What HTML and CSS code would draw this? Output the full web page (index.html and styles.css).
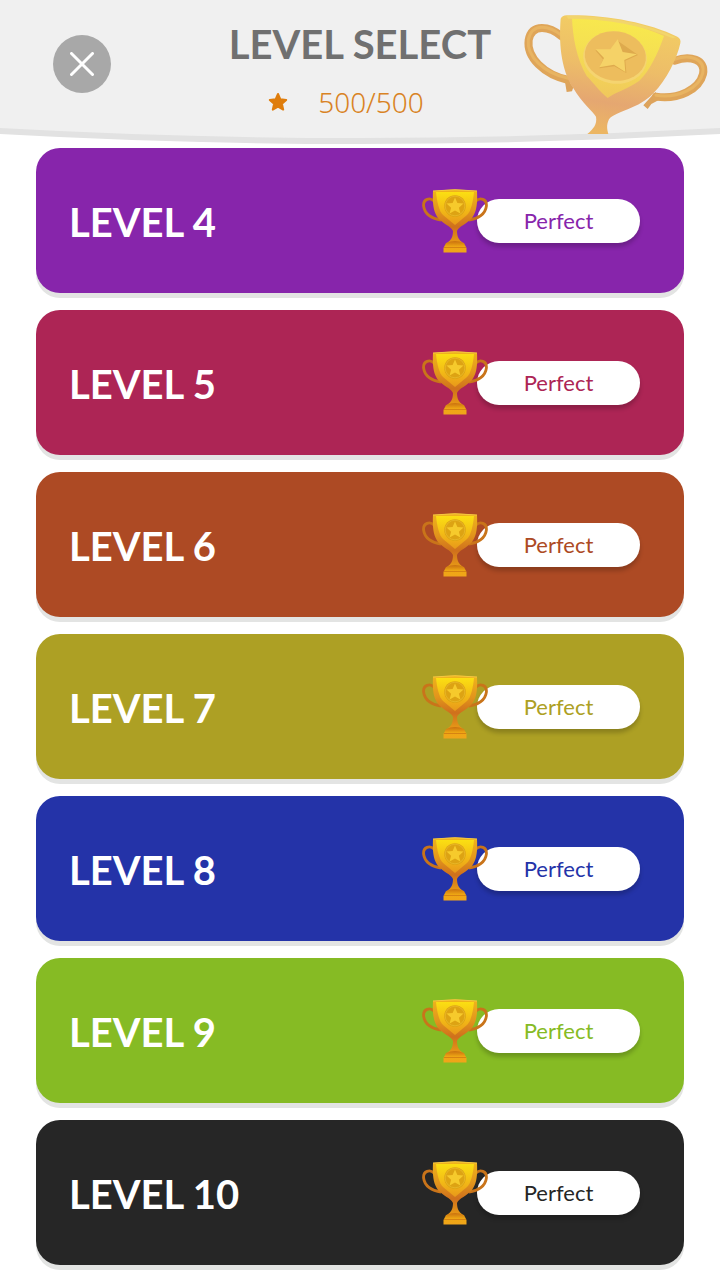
FILE: index.html
```
<!DOCTYPE html>
<html lang="en">
  <head>
    <meta charset="UTF-8">
    <meta name="viewport" content="width=device-width, initial-scale=1.0">
    <title>Level Select</title>
    <link rel="stylesheet" href="styles.css">
  </head>
  <body>
    <!-- shared trophy icon -->
    <svg class="sprite" aria-hidden="true">
      <defs>
        <linearGradient id="cup" x1="0" y1="0" x2="0" y2="1">
          <stop offset="0" stop-color="#efb51c"/>
          <stop offset="0.4" stop-color="#e2951c"/>
          <stop offset="0.7" stop-color="#cf701c"/>
          <stop offset="1" stop-color="#e89a16"/>
        </linearGradient>
        <linearGradient id="shine" x1="0" y1="0" x2="0" y2="1">
          <stop offset="0" stop-color="#fbdf12"/>
          <stop offset="0.5" stop-color="#f3bd16"/>
          <stop offset="1" stop-color="#e8981a"/>
        </linearGradient>
        <linearGradient id="base" x1="0" y1="0" x2="0" y2="1">
          <stop offset="0" stop-color="#c9700f"/>
          <stop offset="0.5" stop-color="#efa814"/>
          <stop offset="1" stop-color="#f0a41a"/>
        </linearGradient>
      </defs>
      <symbol id="trophy" viewBox="0 0 66 64">
        <g fill="none" stroke="#c9741a" stroke-width="2.8">
          <path d="M12 12C8 8 1 10 1.600 17C2.500 25 10 30 19 31"/>
          <path d="M54 12C58 8 65 10 64.400 17C63.500 25 56 30 47 31"/>
        </g>
        <path fill="url(#cup)" d="M11 2Q33 -1 55 2C55.500 14 55 22 50 29C45 35 37 37 35 42C35 48 37 51 41 54H25C29 51 31 48 31 42C29 37 21 35 16 29C11 22 10.500 14 11 2Z"/>
        <path fill="url(#shine)" d="M14 3H52C51 13 49 22 45 26L33 36L21 26C17 22 15 13 14 3Z"/>
        <path fill="none" stroke="#f5c842" d="M11 2Q33 -0.500 55 2"/>
        <circle cx="33" cy="17" r="10.800" fill="#dda313"/>
        <circle cx="33" cy="17" r="9.800" fill="none" stroke="#e9b92b" stroke-width="0.800"/>
        <path fill="#f6ca2c" d="M33 8.500L35.400 14L41.500 14.600L36.900 18.700L38.400 24.600L33 21.400L27.600 24.600L29.100 18.700L24.500 14.600L30.600 14Z"/>
        <path fill="url(#base)" d="M24 54Q33 50 42 54L44.500 59V63.500H21.500V59Z"/>
        <path fill="none" stroke="#cf7a12" stroke-width="0.800" d="M22 58.500H44"/>
      </symbol>
    </svg>

    <header class="header">
      <svg class="header-bg" viewBox="0 0 720 144" preserveAspectRatio="none" aria-hidden="true">
        <path fill="#e2e2e2" d="M0 0H720V134Q360 154 0 134Z"/>
        <path fill="#f0f0f0" d="M0 0H720V128Q360 148 0 128Z"/>
      </svg>
      <button class="close" aria-label="Close">
        <svg viewBox="0 0 24 24" aria-hidden="true">
          <path d="M1.500 1.500L22.500 22.500M22.500 1.500L1.500 22.500"/>
        </svg>
      </button>
      <div class="heading">
        <h1>LEVEL SELECT</h1>
        <p class="score">
          <svg class="star" viewBox="0 0 20 20" aria-hidden="true">
            <path d="M10 2L12.400 7.300L18.200 7.900L13.900 11.800L15.200 17.600L10 14.700L4.800 17.600L6.100 11.800L1.800 7.900L7.600 7.300Z"/>
          </svg>
          <span>500/500</span>
        </p>
      </div>
      <svg class="big-trophy" viewBox="60 0 600 402" aria-hidden="true">
        <defs>
          <linearGradient id="bigCup" x1="0.600" y1="0" x2="0.450" y2="1">
            <stop offset="0" stop-color="#f3cf63"/>
            <stop offset="0.450" stop-color="#edbd68"/>
            <stop offset="0.750" stop-color="#e5a771"/>
            <stop offset="1" stop-color="#ecb663"/>
          </linearGradient>
          <linearGradient id="bigShine" x1="0.550" y1="0" x2="0.400" y2="1">
            <stop offset="0" stop-color="#f8e94d"/>
            <stop offset="0.400" stop-color="#f5e052"/>
            <stop offset="1" stop-color="#f0c75c"/>
          </linearGradient>
        </defs>
        <path fill="#dda35c" d="M192 225L220 262L216 274L200 276L194 240ZM430 316L443 327L454 312L482 297L466 276Z"/>
        <g fill="none" stroke-linecap="round">
          <g stroke="#dfa559" stroke-width="24">
            <path d="M185 109C150 80 96 68 86 120C79 172 132 224 205 240"/>
            <path d="M524 182C570 166 618 178 609 222C598 268 535 300 468 290"/>
          </g>
          <g stroke="#e8b462" stroke-width="9">
            <path d="M185 106C148 77 96 66 85 119C79 170 132 219 205 235"/>
            <path d="M524 178C570 162 617 176 608 220C598 264 535 296 468 286"/>
          </g>
        </g>
        <path fill="url(#bigCup)" d="M182 56Q186 47 200 46C320 44 445 68 532 110Q544 116 541 130C530 178 500 240 460 280C420 325 345 335 327 358C318 376 322 389 325 402H262C280 386 292 374 288 350C280 336 246 310 220 265C180 204 177 120 182 56Z"/>
        <path fill="url(#bigShine)" d="M216 54C320 52 420 74 492 108C474 160 448 214 418 242C382 268 346 276 323 294C300 276 280 248 260 228C230 178 218 110 216 54Z"/>
        <path fill="#f2d56c" d="M199 48C320 46 440 70 528 112L518 115C430 76 320 56 205 56Z"/>
        <ellipse cx="345" cy="173" rx="96" ry="78" fill="#f5d470" transform="rotate(8 345 173)"/>
        <ellipse cx="346" cy="168" rx="92" ry="74" fill="#edbd5d" transform="rotate(8 346 168)"/>
        <path fill="#deaa4d" d="M353 122L414 165L376 182L379 219L343 199L298 205L309 178L286 151L332 150Z"/>
        <path fill="#f5d267" d="M353 118L368 156L411 163L373 180L376 216L342 194L298 202L312 174L287 148L331 148Z"/>
      </svg>
    </header>

    <main class="levels">
      <button class="level purple">
        <span class="name">LEVEL 4</span>
        <svg class="trophy" aria-hidden="true"><use href="#trophy"/></svg>
        <span class="badge">Perfect</span>
      </button>
      <button class="level crimson">
        <span class="name">LEVEL 5</span>
        <svg class="trophy" aria-hidden="true"><use href="#trophy"/></svg>
        <span class="badge">Perfect</span>
      </button>
      <button class="level rust">
        <span class="name">LEVEL 6</span>
        <svg class="trophy" aria-hidden="true"><use href="#trophy"/></svg>
        <span class="badge">Perfect</span>
      </button>
      <button class="level olive">
        <span class="name">LEVEL 7</span>
        <svg class="trophy" aria-hidden="true"><use href="#trophy"/></svg>
        <span class="badge">Perfect</span>
      </button>
      <button class="level blue">
        <span class="name">LEVEL 8</span>
        <svg class="trophy" aria-hidden="true"><use href="#trophy"/></svg>
        <span class="badge">Perfect</span>
      </button>
      <button class="level green">
        <span class="name">LEVEL 9</span>
        <svg class="trophy" aria-hidden="true"><use href="#trophy"/></svg>
        <span class="badge">Perfect</span>
      </button>
      <button class="level black">
        <span class="name">LEVEL 10</span>
        <svg class="trophy" aria-hidden="true"><use href="#trophy"/></svg>
        <span class="badge">Perfect</span>
      </button>
    </main>
  </body>
</html>
```
FILE: styles.css
```
* {
  box-sizing: border-box;
}

body {
  margin: 0;
  background-color: #fff;
  font-family: Lato, "Open Sans", sans-serif;
}

button {
  border: 0;
  font-family: inherit;
  cursor: pointer;
}

.sprite {
  position: absolute;
  width: 0;
  height: 0;
}

/* Header */
.header {
  position: relative;
  display: grid;
  grid-template-columns: 1fr auto 1fr;
  align-items: start;
  height: 144px;
}

.header-bg {
  position: absolute;
  top: 0;
  left: 0;
  width: 100%;
  height: 100%;
  z-index: -1;
}

.close {
  display: flex;
  align-items: center;
  justify-content: center;
  width: 58px;
  height: 58px;
  margin: 35px 0 0 53px;
  padding: 0;
  border-radius: 50%;
  background-color: #a8a8a8;
}

.close svg {
  width: 24px;
  height: 24px;
  fill: none;
  stroke: #fff;
  stroke-width: 3;
  stroke-linecap: round;
}

.heading {
  padding-top: 20px;
  text-align: center;
}

h1 {
  margin: 0;
  color: #707070;
  font-size: 40px;
  line-height: 48px;
  font-weight: 700;
}

.score {
  display: flex;
  align-items: center;
  justify-content: center;
  gap: 30px;
  margin: 16px 0 0;
  padding-right: 28px;
  color: #d98324;
  font-family: "Noto Sans", sans-serif;
  font-size: 28px;
  line-height: 36px;
  font-weight: 300;
}

.star {
  width: 20px;
  height: 20px;
  fill: #df7d0c;
  stroke: #df7d0c;
  stroke-width: 2;
  stroke-linejoin: round;
}

.big-trophy {
  justify-self: end;
  width: 200px;
  height: 134px;
}

/* Level list */
.levels {
  display: flex;
  flex-direction: column;
  gap: 17px;
  padding: 4px 36px 14px;
}

.level {
  display: flex;
  align-items: center;
  height: 145px;
  padding: 0 44px 0 33px;
  border-radius: 24px;
  box-shadow: 0 5px 0 #e3e4e3;
}

.name {
  flex: 1;
  padding-top: 2px;
  color: #fff;
  font-size: 40px;
  line-height: 48px;
  font-weight: 700;
  text-align: left;
}

.trophy {
  position: relative;
  width: 66px;
  height: 64px;
  margin-right: -11px;
}

.badge {
  width: 163px;
  border-radius: 22px;
  background-color: #fff;
  box-shadow: 0 4px 4px rgba(0, 0, 0, 0.2);
  font-size: 22px;
  line-height: 44px;
  font-weight: 400;
  text-align: center;
}

.purple {
  background-color: #8725ab;
  color: #8725ab;
}

.crimson {
  background-color: #ad2555;
  color: #ad2555;
}

.rust {
  background-color: #ad4a24;
  color: #ad4a24;
}

.olive {
  background-color: #ada024;
  color: #ada024;
}

.blue {
  background-color: #2433a8;
  color: #2433a8;
}

.green {
  background-color: #86bb24;
  color: #86bb24;
}

.black {
  background-color: #262626;
  color: #262626;
}
```
